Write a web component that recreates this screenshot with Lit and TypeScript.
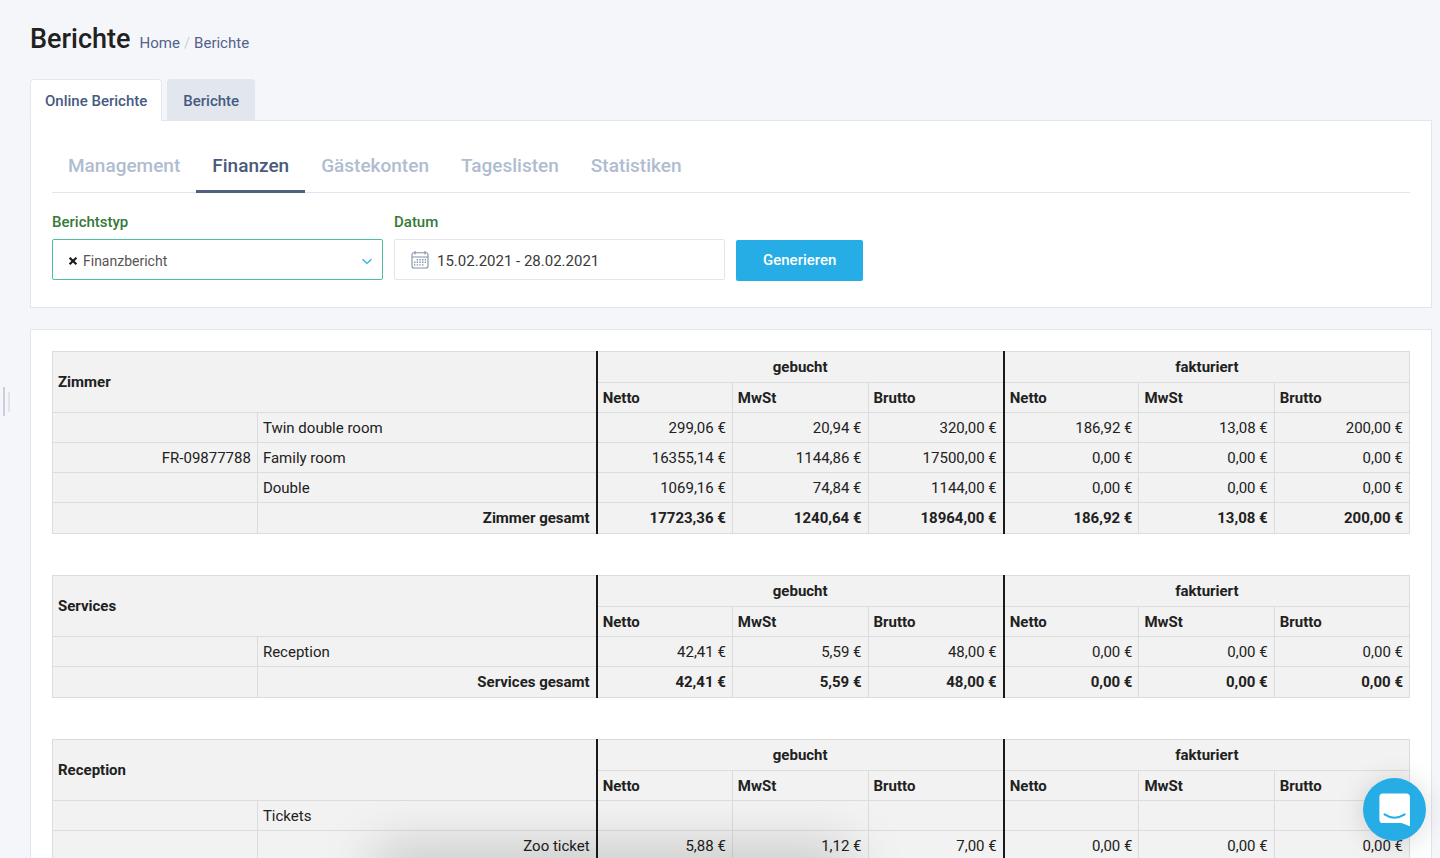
import { LitElement, html, css, svg } from "lit";
import { customElement, property, state } from "lit/decorators.js";

interface Row {
  code?: string;
  name: string;
  nested?: boolean;
  total?: boolean;
  values: string[];
}

interface Section {
  title: string;
  rows: Row[];
}

const SECTIONS: Section[] = [
  {
    title: "Zimmer",
    rows: [
      { name: "Twin double room", values: ["299,06 €", "20,94 €", "320,00 €", "186,92 €", "13,08 €", "200,00 €"] },
      { code: "FR-09877788", name: "Family room", values: ["16355,14 €", "1144,86 €", "17500,00 €", "0,00 €", "0,00 €", "0,00 €"] },
      { name: "Double", values: ["1069,16 €", "74,84 €", "1144,00 €", "0,00 €", "0,00 €", "0,00 €"] },
      { name: "Zimmer gesamt", total: true, values: ["17723,36 €", "1240,64 €", "18964,00 €", "186,92 €", "13,08 €", "200,00 €"] },
    ],
  },
  {
    title: "Services",
    rows: [
      { name: "Reception", values: ["42,41 €", "5,59 €", "48,00 €", "0,00 €", "0,00 €", "0,00 €"] },
      { name: "Services gesamt", total: true, values: ["42,41 €", "5,59 €", "48,00 €", "0,00 €", "0,00 €", "0,00 €"] },
    ],
  },
  {
    title: "Reception",
    rows: [
      { name: "Tickets", values: ["", "", "", "", "", ""] },
      { name: "Zoo ticket", nested: true, values: ["5,88 €", "1,12 €", "7,00 €", "0,00 €", "0,00 €", "0,00 €"] },
    ],
  },
];

@customElement("report-table")
export class ReportTable extends LitElement {
  @property({ attribute: false }) section!: Section;

  static styles = css`
    :host {
      display: block;
    }
    .table {
      width: 100%;
      table-layout: fixed;
      border-collapse: collapse;
      background: #f2f2f2;
      color: #212121;
      font-size: 15px;
      line-height: 20px;
    }
    .code {
      width: 15.1%;
    }
    .name {
      width: 25%;
    }
    .booked {
      width: 10%;
    }
    .cell {
      box-sizing: border-box;
      height: 30px;
      padding: 0 5px;
      border: 1px solid #dcdcdc;
      text-align: left;
      font-weight: 400;
      white-space: nowrap;
    }
    .tall {
      height: 31px;
    }
    .head,
    .total .cell {
      font-weight: 700;
    }
    .total .cell {
      height: 31px;
    }
    .group {
      text-align: center;
    }
    .right {
      padding-right: 6px;
      text-align: right;
    }
    .divided {
      border-left: 2px solid #1a1a1a;
    }
  `;

  render() {
    const { title, rows } = this.section;
    return html`
      <table class="table">
        <colgroup>
          <col class="code" />
          <col class="name" />
          <col class="booked" />
          <col class="booked" />
          <col class="booked" />
          <col />
          <col />
          <col />
        </colgroup>
        <thead>
          <tr>
            <th class="cell head" colspan="2" rowspan="2">${title}</th>
            <th class="cell head tall group divided" colspan="3" scope="colgroup">gebucht</th>
            <th class="cell head tall group divided" colspan="3" scope="colgroup">fakturiert</th>
          </tr>
          <tr>
            ${["Netto", "MwSt", "Brutto", "Netto", "MwSt", "Brutto"].map(
              (label, i) => html`<th class="cell head ${i % 3 === 0 ? "divided" : ""}" scope="col">${label}</th>`
            )}
          </tr>
        </thead>
        <tbody>
          ${rows.map(
            (row) => html`
              <tr class=${row.total ? "total" : ""}>
                <td class="cell right">${row.code ?? ""}</td>
                <th class="cell ${row.total || row.nested ? "right" : ""}" scope="row">${row.name}</th>
                ${row.values.map(
                  (value, i) => html`<td class="cell right ${i % 3 === 0 ? "divided" : ""}">${value}</td>`
                )}
              </tr>
            `
          )}
        </tbody>
      </table>
    `;
  }
}

const calendarIcon = svg`
  <g fill="none" stroke="#8490a8" stroke-width="1.1">
    <rect x="1" y="1.800" width="16" height="15.200" rx="2" />
    <path d="M1 6H17M4 0v3.600M14 0v3.600" />
  </g>
  <g fill="none" stroke="#8490a8" stroke-width="1.4" stroke-dasharray="1.400 1.300">
    <path d="M5.700 8.700H15M3 11.300H15M3 13.900H12.500" />
  </g>
`;

@customElement("app-root")
export class AppRoot extends LitElement {
  @state() private view = "Finanzen";

  static styles = css`
    :host {
      display: block;
      height: 100vh;
      overflow: hidden;
      position: relative;
      background: #f5f6fa;
      color: #212121;
      font-family: Roboto, "Liberation Sans", sans-serif;
      font-size: 15px;
      line-height: 20px;
    }
    .page {
      padding: 21px 8px 0 30px;
    }
    .header {
      display: flex;
      align-items: baseline;
      gap: 9px;
    }
    .title {
      margin: 0;
      font-size: 27px;
      line-height: 36px;
      font-weight: 500;
    }
    .crumbs {
      display: flex;
      gap: 4px;
      color: #ccd0d8;
    }
    .crumb {
      color: #52628a;
      text-decoration: none;
    }
    .tabs {
      display: flex;
      gap: 5px;
      margin-top: 22px;
    }
    .tab {
      box-sizing: border-box;
      height: 41px;
      padding: 1px 15px 0;
      border: 1px solid #e2e7f0;
      border-bottom: 0;
      border-radius: 4px 4px 0 0;
      background: #e2e7ee;
      color: #465a80;
      font: 500 15px/20px Roboto, "Liberation Sans", sans-serif;
    }
    .tab.active {
      height: 42px;
      margin-bottom: -1px;
      padding: 0 14px;
      position: relative;
      background: #fff;
    }
    .panel {
      border: 1px solid #e2e5ef;
      background: #fff;
      padding: 21px;
    }
    .filters {
      padding: 17px 21px 27px;
      margin-bottom: 21px;
    }
    .views {
      display: flex;
      border-bottom: 1px solid #e2e5ef;
    }
    .view {
      height: 55px;
      margin-bottom: -1px;
      padding: 3px 16px 0;
      border: 0;
      border-bottom: 3px solid transparent;
      background: none;
      color: #b0bccf;
      font: 500 19px/24px Roboto, "Liberation Sans", sans-serif;
    }
    .view.active {
      border-color: #4f6080;
      color: #4a5a7d;
    }
    .form {
      display: flex;
      align-items: flex-end;
      gap: 11px;
      margin-top: 19px;
    }
    .field {
      display: flex;
      flex-direction: column;
      gap: 7px;
      flex: 0 1 331px;
    }
    .label {
      color: #357a38;
      font-weight: 500;
    }
    .control {
      box-sizing: border-box;
      height: 41px;
      display: flex;
      align-items: center;
      border: 1px solid #e2e5ef;
      border-radius: 2px;
      background: #fff;
    }
    .control.valid {
      border-color: #4fbf9a;
      padding: 2px 10px 0 15px;
    }
    .control.date {
      padding-left: 16px;
      gap: 8px;
    }
    .clear {
      display: flex;
      padding: 0;
      border: 0;
      background: none;
    }
    .select,
    .input {
      flex: 1;
      min-width: 0;
      height: 24px;
      padding: 2px 0 0;
      border: 0;
      outline: 0;
      background: none;
      font: 400 15px/20px Roboto, "Liberation Sans", sans-serif;
      color: #3a3a3a;
    }
    .select {
      appearance: none;
      margin-left: 5px;
      padding: 0;
      font-size: 14px;
      color: #555;
    }
    .submit {
      height: 41px;
      margin-bottom: -1px;
      padding: 0 27px 2px;
      border: 0;
      border-radius: 2px;
      background: #27ade5;
      color: #fff;
      font: 500 15px/20px Roboto, "Liberation Sans", sans-serif;
    }
    .reports {
      display: flex;
      flex-direction: column;
      gap: 41px;
    }
    .handle {
      position: absolute;
      left: 3px;
      top: 387px;
      display: flex;
      align-items: center;
      gap: 3px;
      padding: 0;
      border: 0;
      background: none;
    }
    .bar {
      width: 2px;
      height: 29px;
      background: #c9d0dc;
    }
    .bar.short {
      height: 20px;
      background: #e0e4eb;
    }
    .shade {
      position: absolute;
      left: 376px;
      bottom: -20px;
      width: 474px;
      height: 20px;
      box-shadow: 0 0 54px rgba(0, 0, 0, 0.4);
      pointer-events: none;
    }
    .chat {
      position: absolute;
      right: 14px;
      bottom: 17px;
      width: 63px;
      height: 63px;
      padding: 0;
      border: 0;
      border-radius: 50%;
      background: #27ade5;
      box-shadow: 0 2px 28px rgba(0, 0, 0, 0.15);
    }
    .chat-icon {
      display: block;
    }
  `;

  render() {
    return html`
      <main class="page">
        <header class="header">
          <h1 class="title">Berichte</h1>
          <nav class="crumbs" aria-label="Breadcrumb">
            <a class="crumb" href="#">Home</a><span>/</span><a class="crumb" href="#">Berichte</a>
          </nav>
        </header>
        <div class="tabs">
          <button class="tab active">Online Berichte</button>
          <button class="tab">Berichte</button>
        </div>
        <section class="panel filters">
          <nav class="views">
            ${["Management", "Finanzen", "Gästekonten", "Tageslisten", "Statistiken"].map(
              (name) => html`<button
                class="view ${name === this.view ? "active" : ""}"
                @click=${() => (this.view = name)}
              >${name}</button>`
            )}
          </nav>
          <form class="form" @submit=${(e: Event) => e.preventDefault()}>
            <div class="field">
              <label class="label" for="type">Berichtstyp</label>
              <div class="control valid">
                <button class="clear" type="button" aria-label="Auswahl entfernen">
                  <svg width="10" height="10" viewBox="0 0 10 10">
                    <path d="M1.600 1.800 8.400 8.200M8.400 1.800 1.600 8.200" stroke="#1a1a1a" stroke-width="2.200" />
                  </svg>
                </button>
                <select class="select" id="type">
                  <option>Finanzbericht</option>
                </select>
                <svg width="10" height="10" viewBox="0 0 10 10" aria-hidden="true">
                  <path d="M.6 3.200 5 7.400 9.400 3.200" fill="none" stroke="#27ade5" stroke-width="1.300" />
                </svg>
              </div>
            </div>
            <div class="field">
              <label class="label" for="range">Datum</label>
              <div class="control date">
                <svg width="18" height="18" viewBox="0 0 18 18" aria-hidden="true">${calendarIcon}</svg>
                <input class="input" id="range" type="text" value="15.02.2021 - 28.02.2021" />
              </div>
            </div>
            <button class="submit" type="submit">Generieren</button>
          </form>
        </section>
        <section class="panel reports">
          ${SECTIONS.map((s) => html`<report-table .section=${s}></report-table>`)}
        </section>
      </main>
      <button class="handle" aria-label="Seitenleiste">
        <span class="bar"></span><span class="bar short"></span>
      </button>
      <div class="shade"></div>
      <button class="chat" aria-label="Chat öffnen">
        <svg class="chat-icon" width="63" height="63" viewBox="0 0 63 63">
          <path d="M20 15.500H43.300a3.600 3.600 0 0 1 3.600 3.600V48.300L38.500 45H20a3.600 3.600 0 0 1-3.600-3.600V19.100a3.600 3.600 0 0 1 3.600-3.600z" fill="#fff" />
          <path d="M21.500 36.400q10 6.600 20.200 0" fill="none" stroke="#27ade5" stroke-width="2" stroke-linecap="round" />
        </svg>
      </button>
    `;
  }
}
